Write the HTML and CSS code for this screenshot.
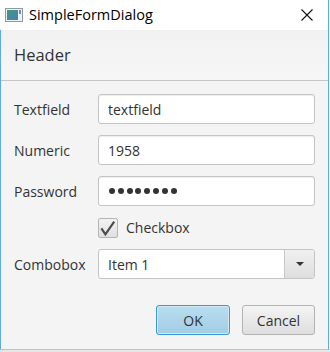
FILE: index.html
```html
<!DOCTYPE html>
<html lang="en">
<head>
    <meta charset="UTF-8">
    <title>SimpleFormDialog</title>
    <link rel="stylesheet" href="styles.css">
</head>
<body>
    <div class="window">
        <div class="titlebar">
            <svg class="app-icon" width="18" height="14" viewBox="0 0 18 14">
                <defs>
                    <linearGradient id="pane" x1="0" y1="0" x2="1" y2="1">
                        <stop offset="0" stop-color="#3f9a7a"/>
                        <stop offset="1" stop-color="#4a7fb8"/>
                    </linearGradient>
                </defs>
                <rect x="0.5" y="0.5" width="17" height="13" fill="#eef2f5" stroke="#8e9aa6"/>
                <rect x="2" y="2" width="11" height="10" fill="url(#pane)"/>
                <rect x="14" y="2" width="2" height="4" fill="#6f8fa8"/>
            </svg>
            <span class="title">SimpleFormDialog</span>
            <svg class="close" width="12" height="12" viewBox="0 0 12 12">
                <path d="M0.5 0.5 L11.5 11.5 M11.5 0.5 L0.5 11.5" stroke="#111" stroke-width="1.1" fill="none"/>
            </svg>
        </div>

        <div class="dialog">
            <div class="header">Header</div>

            <div class="form">
                <label class="label">Textfield</label>
                <input class="field" type="text" value="textfield">

                <label class="label">Numeric</label>
                <input class="field" type="text" value="1958">

                <label class="label">Password</label>
                <div class="field dots">
                    <span></span><span></span><span></span><span></span>
                    <span></span><span></span><span></span><span></span>
                </div>

                <div></div>
                <div class="check-row">
                    <span class="checkbox">
                        <svg width="20" height="20" viewBox="0 0 20 20">
                            <path d="M3.4 10.4 L7.4 16.3 L16.2 3.6" stroke="#4a4a4a" stroke-width="2.1" fill="none"/>
                        </svg>
                    </span>
                    <span>Checkbox</span>
                </div>

                <label class="label">Combobox</label>
                <div class="combo">
                    <span class="combo-value">Item 1</span>
                    <span class="combo-arrow"><span class="triangle"></span></span>
                </div>
            </div>

            <div class="buttons">
                <button class="btn btn-default">OK</button>
                <button class="btn">Cancel</button>
            </div>
        </div>
        <div class="bottom-edge"></div>
    </div>
</body>
</html>
```

FILE: styles.css
```css
body {
    margin: 0;
    font-family: 'Open Sans', 'Noto Sans', sans-serif;
    color: #333;
    background: #fff;
}

.window {
    width: 330px;
    height: 352px;
    display: flex;
    flex-direction: column;
}

.titlebar {
    height: 30px;
    display: flex;
    align-items: center;
    background: #fff;
    border-right: 1px solid #5aaaf0;
    margin-right: 1px;
}

.app-icon {
    margin: 0 0 1px 5px;
}

.title {
    flex: 1;
    margin-left: 6px;
    margin-bottom: 2px;
    font-size: 14.5px;
    color: #000;
}

.close {
    margin-right: 15px;
    margin-bottom: 1px;
}

.dialog {
    height: 319px;
    background: #f4f4f4;
    border-left: 1px solid #5aaaf0;
    border-right: 1px solid #5aaaf0;
    margin-right: 1px;
    display: flex;
    flex-direction: column;
}

.header {
    height: 51px;
    box-sizing: border-box;
    padding: 13px 0 0 13px;
    font-size: 16.5px;
    color: #333;
    background: linear-gradient(#f1f1f1, #f6f6f6);
    border-bottom: 1px solid #c6c6c6;
}

.form {
    display: grid;
    grid-template-columns: 84px 217px;
    row-gap: 11px;
    align-items: center;
    padding: 13px 0 0 13px;
}

.label {
    font-size: 14px;
    color: #333;
}

.field {
    height: 30px;
    box-sizing: border-box;
    border: 1px solid #c4c4c4;
    border-radius: 3px;
    background: #fff;
    padding: 0 9px;
    font-family: inherit;
    font-size: 14px;
    color: #333;
    outline: none;
    box-shadow: inset 0 1px 1px #eee;
}

.dots {
    display: flex;
    align-items: center;
    gap: 2.8px;
    padding-left: 10px;
}

.dots span {
    width: 6px;
    height: 6px;
    border-radius: 50%;
    background: #333;
}

.check-row {
    display: flex;
    align-items: center;
    gap: 8px;
    height: 21px;
    font-size: 14px;
}

.checkbox {
    width: 20px;
    height: 20px;
    box-sizing: border-box;
    border: 1px solid #b5b5b5;
    border-radius: 2px;
    background: linear-gradient(#f2f2f2, #e0e0e0);
    display: flex;
}

.checkbox svg {
    margin: -1px;
}

.combo {
    height: 30px;
    box-sizing: border-box;
    border: 1px solid #c4c4c4;
    border-radius: 3px;
    background: #fff;
    display: flex;
    align-items: center;
    font-size: 14px;
}

.combo-value {
    flex: 1;
    padding-left: 9px;
}

.combo-arrow {
    width: 29px;
    height: 100%;
    border-left: 1px solid #c9c9c9;
    background: linear-gradient(#f0f0f0, #dedede);
    border-radius: 0 2px 2px 0;
    display: flex;
    align-items: center;
    justify-content: center;
}

.triangle {
    width: 0;
    height: 0;
    border-left: 4px solid transparent;
    border-right: 4px solid transparent;
    border-top: 4px solid #333;
}

.buttons {
    display: flex;
    justify-content: flex-end;
    gap: 12px;
    margin-top: 26px;
    padding-right: 13px;
}

.btn {
    height: 30px;
    width: 73px;
    border: 1px solid #b3b3b3;
    border-radius: 3px;
    background: linear-gradient(#f4f4f4, #dedede);
    font-family: inherit;
    font-size: 14px;
    color: #333;
    padding: 0;
}

.btn-default {
    width: 74px;
    border-color: #3a9ad9;
    background: linear-gradient(#b8ddf0, #a3cde4);
    box-shadow: inset 0 0 0 1px #cfe9f7;
}

.bottom-edge {
    flex: 1;
    border-top: 1px solid #c2c2c2;
    background: #e6e6e6;
}
```
